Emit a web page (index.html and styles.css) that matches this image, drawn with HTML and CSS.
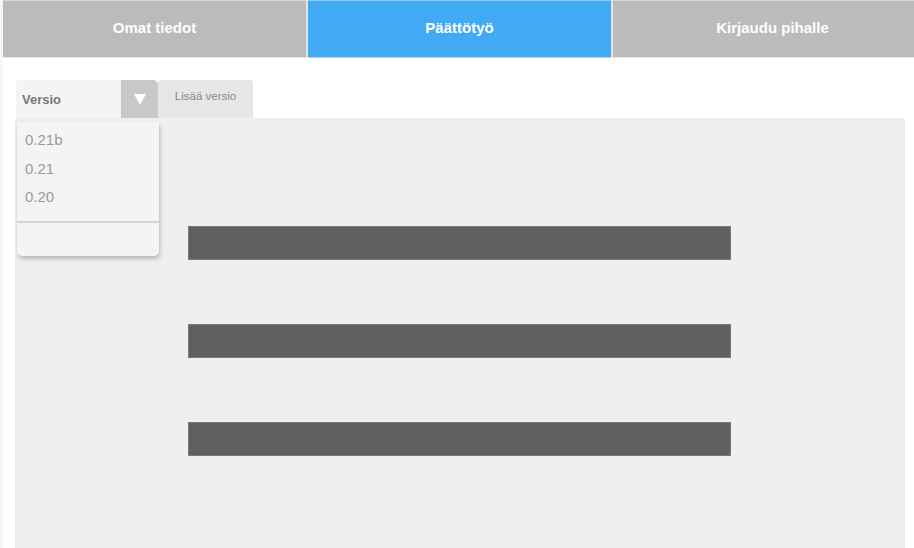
FILE: index.html
```html
<!DOCTYPE html>
<html lang="fi">
<head>
<meta charset="utf-8">
<title>Päättötyö</title>
<link rel="stylesheet" href="styles.css">
</head>
<body>
<div class="page">
  <nav class="tabs">
    <div class="tab">Omat tiedot</div>
    <div class="tab active">Päättötyö</div>
    <div class="tab last">Kirjaudu pihalle</div>
  </nav>
  <main class="content">
    <div class="toolbar">
      <div class="select">
        <span class="select-label">Versio</span>
        <span class="select-btn"><svg width="12" height="11" viewBox="0 0 12 11"><polygon points="0,0 12,0 6,11" fill="#fff"/></svg></span>
        <ul class="menu">
          <li>0.21b</li>
          <li>0.21</li>
          <li>0.20</li>
          <li class="menu-sep"></li>
        </ul>
      </div>
      <button class="add-btn">Lisää versio</button>
    </div>
    <section class="panel">
      <div class="bar"></div>
      <div class="bar"></div>
      <div class="bar"></div>
    </section>
  </main>
</div>
</body>
</html>
```
FILE: styles.css
```css
* { box-sizing: border-box; }
html, body { margin: 0; padding: 0; }
body {
  font-family: "Liberation Sans", Arial, sans-serif;
  background: #fff;
  width: 914px;
  height: 548px;
  overflow: hidden;
}
.page {
  height: 548px;
  border-left: 3px solid #f6f6f6;
  display: flex;
  flex-direction: column;
}
.tabs {
  display: flex;
  gap: 2px;
  height: 58px;
  background: #e4e4e4;
}
.tab {
  flex: 0 0 303px;
  display: flex;
  align-items: center;
  justify-content: center;
  background: #bbbbbb;
  color: #fff;
  font-weight: bold;
  font-size: 15px;
  border-top: 1px solid #d8d8d8;
  border-bottom: 1px solid #e8e8e8;
  padding-bottom: 3px;
}
.tab.last { flex: 1; padding-left: 18px; }
.tab.active { background: #42a9f5; border-top-color: #8ccaf8; border-bottom-color: #a8d6fa; }
.content {
  flex: 1;
  display: flex;
  flex-direction: column;
  padding: 22px 9px 0 12px;
}
.toolbar {
  display: flex;
  height: 38px;
  margin-left: 1px;
}
.select {
  position: relative;
  width: 142px;
  display: flex;
  background: #f4f4f4;
  border-radius: 3px 5px 0 0;
}
.select-label {
  flex: 1;
  display: flex;
  align-items: center;
  padding-left: 6px;
  color: #777;
  font-weight: bold;
  font-size: 13px;
}
.select-btn {
  width: 37px;
  display: flex;
  align-items: center;
  justify-content: center;
  background: #c8c8c8;
  border-radius: 0 5px 0 0;
}
.menu {
  position: absolute;
  top: 42px;
  left: 1px;
  width: 142px;
  height: 134px;
  margin: 0;
  padding: 4px 0 0;
  list-style: none;
  background: #f4f4f4;
  border-radius: 0 0 5px 5px;
  box-shadow: 1px 3px 4px rgba(0,0,0,0.22);
  z-index: 2;
}
.menu li {
  height: 28.5px;
  line-height: 28.5px;
  padding-left: 8px;
  font-size: 15px;
  color: #9a9a9a;
}
.menu li.menu-sep {
  height: 0;
  margin-top: 9px;
  border-top: 2px solid #d4d4d4;
}
.add-btn {
  width: 95px;
  background: #e6e6e6;
  border: none;
  border-radius: 3px 3px 0 0;
  color: #888;
  font-family: "Liberation Sans", Arial, sans-serif;
  font-size: 11.5px;
  padding: 10px 0 0;
  display: flex;
  justify-content: center;
  align-items: flex-start;
}
.panel {
  flex: 1;
  background: #efefef;
  padding: 108px 0 0 173px;
  display: flex;
  flex-direction: column;
  gap: 64px;
}
.bar {
  width: 543px;
  height: 34px;
  background: #606060;
  border: 1px solid #7a7a7a;
}
```
